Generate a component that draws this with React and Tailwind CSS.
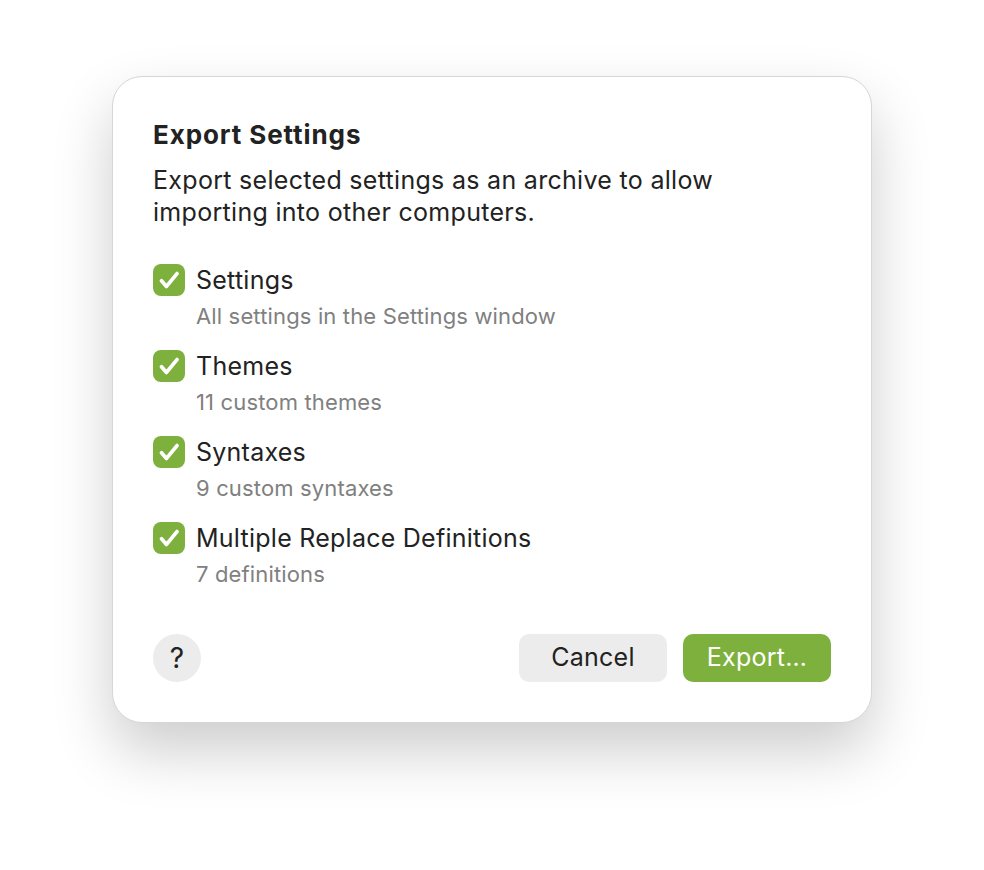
import React from "react";

const items = [
  { label: "Settings", desc: "All settings in the Settings window" },
  { label: "Themes", desc: "11 custom themes" },
  { label: "Syntaxes", desc: "9 custom syntaxes" },
  { label: "Multiple Replace Definitions", desc: "7 definitions" },
];

const Check = () => (
  <span className="w-8 h-8 rounded-[8px] bg-[#7db03c] flex items-center justify-center shrink-0">
    <svg width="32" height="32" viewBox="0 0 32 32" fill="none">
      <path d="M8.5 16.8l5 5.6L24 9.6" stroke="white" strokeWidth="3.8" strokeLinecap="round" strokeLinejoin="round" />
    </svg>
  </span>
);

export default function App() {
  return (
    <div className="w-[984px] h-[870px] bg-white pt-[76px] font-['Inter','Noto_Sans',sans-serif] text-[#222]">
      <div className="mx-auto w-[760px] h-[647px] bg-white rounded-[30px] border border-[#d6d6d6] shadow-[0_28px_60px_rgba(0,0,0,0.2)] px-10 pt-[42px] pb-10 flex flex-col">
        <h1 className="text-[26px] font-bold leading-[32px] tracking-[0.9px]">Export Settings</h1>
        <p className="mt-[13px] text-[25px] leading-[32px] w-[620px] tracking-[0.3px]">
          Export selected settings as an archive to allow importing into other computers.
        </p>
        <div className="mt-[36px] flex flex-col gap-[20px]">
          {items.map((it) => (
            <div key={it.label}>
              <div className="flex items-center gap-[11px] h-8">
                <Check />
                <span className="text-[25px] leading-8 tracking-[0.25px]">{it.label}</span>
              </div>
              <div className="pl-[43px] mt-[7px] text-[22px] leading-[27px] text-[#808080] tracking-[0.15px]">{it.desc}</div>
            </div>
          ))}
        </div>
        <div className="mt-auto flex items-center">
          <button className="w-12 h-12 rounded-full bg-[#ececec] text-[28px] text-[#222] flex items-center justify-center">?</button>
          <div className="ml-auto flex gap-4">
            <button className="w-[148px] h-12 rounded-[10px] bg-[#ececec] text-[25px] text-[#222] tracking-[0.25px]">Cancel</button>
            <button className="w-[148px] h-12 rounded-[10px] bg-[#7db03c] text-[25px] text-white tracking-[0.25px]">Export…</button>
          </div>
        </div>
      </div>
    </div>
  );
}
